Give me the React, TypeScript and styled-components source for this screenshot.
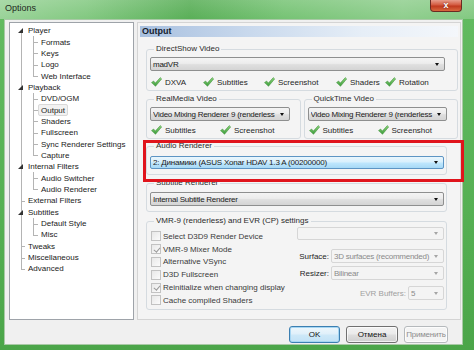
import React from 'react'
import styled, { createGlobalStyle } from 'styled-components'

type Conn = { up?: boolean; down?: boolean; right?: boolean; arrow?: boolean }

interface TreeItem {
    label: string
    level: 0 | 1
    open?: boolean
    first?: boolean
    lastTop?: boolean
    lastChild?: boolean
    selected?: boolean
}

const treeItems: TreeItem[] = [
    { label: 'Player', level: 0, open: true, first: true },
    { label: 'Formats', level: 1 },
    { label: 'Keys', level: 1 },
    { label: 'Logo', level: 1 },
    { label: 'Web Interface', level: 1, lastChild: true },
    { label: 'Playback', level: 0, open: true },
    { label: 'DVD/OGM', level: 1 },
    { label: 'Output', level: 1, selected: true },
    { label: 'Shaders', level: 1 },
    { label: 'Fullscreen', level: 1 },
    { label: 'Sync Renderer Settings', level: 1 },
    { label: 'Capture', level: 1, lastChild: true },
    { label: 'Internal Filters', level: 0, open: true },
    { label: 'Audio Switcher', level: 1 },
    { label: 'Audio Renderer', level: 1, lastChild: true },
    { label: 'External Filters', level: 0 },
    { label: 'Subtitles', level: 0, open: true },
    { label: 'Default Style', level: 1 },
    { label: 'Misc', level: 1, lastChild: true },
    { label: 'Tweaks', level: 0 },
    { label: 'Miscellaneous', level: 0 },
    { label: 'Advanced', level: 0, lastTop: true },
]

const GlobalStyle = createGlobalStyle`
    html, body { margin: 0; padding: 0; }
    body {
        font-family: "Liberation Sans", Arial, sans-serif;
        font-size: 8px;
        color: #1e1e1e;
    }
`

const CheckIcon: React.FC = () => (
    <svg width="11" height="10" viewBox="0 0 11 10">
        <defs>
            <linearGradient id="tick" x1="0" y1="0" x2="0" y2="1">
                <stop offset="0" stopColor="#8fd67e" />
                <stop offset="1" stopColor="#3c9c3a" />
            </linearGradient>
        </defs>
        <path d="M0.5 5.6 L2.6 4 L4.3 6.1 L9.3 0.6 L10.7 1.9 L4.5 9.3 Z" fill="url(#tick)" stroke="#3b8d37" strokeWidth="0.5" />
    </svg>
)

const Options: React.FC = () => {
    return (
        <Window>
            <TitleBar>
                <Title>Options</Title>
                <CloseButton>x</CloseButton>
            </TitleBar>
            <Client>
                <Main>
                    <Tree>
                        {treeItems.map((item) => {
                            const top: Conn = item.level === 0
                                ? { up: !item.first, down: !item.lastTop, right: !item.open, arrow: item.open }
                                : { up: true, down: true }
                            return (
                                <TreeRow key={item.label}>
                                    <Cell $w={9} $x={5} $up={top.up} $down={top.down} $right={top.right}>
                                        {top.arrow && <Arrow />}
                                    </Cell>
                                    {item.level === 1 && (
                                        <Cell $w={13} $x={8} $up $down={!item.lastChild} $right />
                                    )}
                                    <TreeLabel $selected={item.selected}>{item.label}</TreeLabel>
                                </TreeRow>
                            )
                        })}
                    </Tree>
                    <Panel>
                        <Header>Output</Header>
                        <Body>
                            <Group $mt={7}>
                                <Legend>DirectShow Video</Legend>
                                <Select><SelectText>madVR</SelectText><Caret /></Select>
                                <Checks $cols="52px 61px 72px 49px auto">
                                    <CheckItem><CheckIcon />DXVA</CheckItem>
                                    <CheckItem><CheckIcon />Subtitles</CheckItem>
                                    <CheckItem><CheckIcon />Screenshot</CheckItem>
                                    <CheckItem><CheckIcon />Shaders</CheckItem>
                                    <CheckItem><CheckIcon />Rotation</CheckItem>
                                </Checks>
                            </Group>
                            <Pair>
                                <Group $mt={0} $grow>
                                    <Legend>RealMedia Video</Legend>
                                    <Select $w={140}><SelectText>Video Mixing Renderer 9 (renderless</SelectText><Caret /></Select>
                                    <Checks $cols="69px auto" $mt={3}>
                                        <CheckItem><CheckIcon />Subtitles</CheckItem>
                                        <CheckItem><CheckIcon />Screenshot</CheckItem>
                                    </Checks>
                                </Group>
                                <Group $mt={0} $grow>
                                    <Legend>QuickTime Video</Legend>
                                    <Select $w={139}><SelectText>Video Mixing Renderer 9 (renderless</SelectText><Caret /></Select>
                                    <Checks $cols="69px auto" $mt={3}>
                                        <CheckItem><CheckIcon />Subtitles</CheckItem>
                                        <CheckItem><CheckIcon />Screenshot</CheckItem>
                                    </Checks>
                                </Group>
                            </Pair>
                            <Group $mt={2} $narrow $pt={5} $pb={5}>
                                <Legend>Audio Renderer</Legend>
                                <Select $variant="active" $h={13}>
                                    <SelectText $spacing={-0.2}>2: Динамики (ASUS Xonar HDAV 1.3 A (00200000)</SelectText><Caret />
                                </Select>
                            </Group>
                            <Group $mt={3} $narrow $pt={4} $pb={5}>
                                <Legend>Subtitle Renderer</Legend>
                                <Select $h={14}><SelectText>Internal Subtitle Renderer</SelectText><Caret /></Select>
                            </Group>
                            <Group $mt={4} $narrow $pt={1} $pb={2}>
                                <Legend>VMR-9 (renderless) and EVR (CP) settings</Legend>
                                <VmrLayout>
                                    <BoxList>
                                        <BoxRow><Box /> Select D3D9 Render Device</BoxRow>
                                        <BoxRow><Box $checked /> VMR-9 Mixer Mode</BoxRow>
                                        <BoxRow><Box /> Alternative VSync</BoxRow>
                                        <BoxRow><Box /> D3D Fullscreen</BoxRow>
                                        <BoxRow><Box $checked /> Reinitialize when changing display</BoxRow>
                                        <BoxRow><Box /> Cache compiled Shaders</BoxRow>
                                    </BoxList>
                                    <Settings>
                                        <Select $variant="disabled" $h={13}><SelectText>&nbsp;</SelectText><Caret $muted /></Select>
                                        <SettingRow $mt={9}>
                                            <SettingLabel>Surface:</SettingLabel>
                                            <Select $variant="disabled" $w={113}><SelectText>3D surfaces (recommended)</SelectText><Caret $muted /></Select>
                                        </SettingRow>
                                        <SettingRow $mt={3}>
                                            <SettingLabel>Resizer:</SettingLabel>
                                            <Select $variant="disabled" $w={113}><SelectText>Bilinear</SelectText><Caret $muted /></Select>
                                        </SettingRow>
                                        <SettingRow $mt={6}>
                                            <SettingLabel $muted>EVR Buffers:</SettingLabel>
                                            <Select $variant="disabled" $w={36}><SelectText>5</SelectText><Caret $muted /></Select>
                                        </SettingRow>
                                    </Settings>
                                </VmrLayout>
                            </Group>
                        </Body>
                    </Panel>
                </Main>
                <Footer>
                    <Button $kind="default" $w={51}>OK</Button>
                    <Button $w={52}>Отмена</Button>
                    <Button $kind="disabled" $w={44}>Применить</Button>
                </Footer>
            </Client>
            <Highlight />
        </Window>
    )
}

export default function App() {
    return (
        <>
            <GlobalStyle />
            <Options />
        </>
    )
}

const Window = styled.div`
    position: relative;
    width: 474px;
    height: 350px;
    box-sizing: border-box;
    display: flex;
    flex-direction: column;
    padding: 0 11px 5px 4px;
    background: linear-gradient(180deg, #7cc67a 0, #62ba60 20px, #56b054 60%, #4ba549 100%);
    overflow: hidden;
`

const TitleBar = styled.div`
    display: flex;
    justify-content: space-between;
    align-items: flex-start;
    height: 19px;
    margin: 0 -11px 0 -4px;
    padding: 0 12px 0 5px;
    background: linear-gradient(90deg,
        rgba(255,255,255,0.35) 0,
        rgba(255,255,255,0.2) 18%,
        rgba(20,90,20,0.12) 40%,
        rgba(255,255,255,0.12) 60%,
        rgba(255,255,255,0.28) 85%,
        rgba(255,255,255,0.2) 100%);
`

const Title = styled.div`
    font-size: 9px;
    line-height: 17px;
    color: #1d2a1d;
`

const CloseButton = styled.div`
    width: 32px;
    height: 12px;
    box-sizing: border-box;
    border: 1px solid #6b2a22;
    border-top: none;
    border-radius: 0 0 4px 4px;
    background: linear-gradient(180deg, #e79d8c 0, #d45a40 45%, #c0391f 55%, #d8683e 100%);
    color: #fff;
    font-weight: bold;
    font-size: 9px;
    line-height: 10px;
    text-align: center;
    text-shadow: 0 0 2px #5a1a10;
`

const Client = styled.div`
    flex: 1;
    display: flex;
    flex-direction: column;
    background: #f0f0f0;
    border: 1px solid #a9c9a6;
    padding: 2px 1px 0 4px;
`

const Main = styled.div`
    display: flex;
    height: 298px;
`

const Tree = styled.div`
    width: 125px;
    box-sizing: border-box;
    background: #fff;
    border: 1px solid #9ea3a9;
    padding: 2px 0 0 6px;
`

const TreeRow = styled.div`
    display: flex;
    align-items: stretch;
    height: 11.35px;
`

const Cell = styled.div<{ $w: number; $x: number; $up?: boolean; $down?: boolean; $right?: boolean }>`
    position: relative;
    flex: none;
    width: ${(p) => p.$w}px;
    &::before {
        content: '';
        position: absolute;
        left: ${(p) => p.$x}px;
        width: 1px;
        top: ${(p) => (p.$up ? '0' : '50%')};
        bottom: ${(p) => (p.$down ? '0' : '50%')};
        background: #b4b4b4;
        display: ${(p) => (p.$up || p.$down ? 'block' : 'none')};
    }
    &::after {
        content: '';
        position: absolute;
        left: ${(p) => p.$x}px;
        right: 0;
        top: 50%;
        height: 1px;
        background: #b4b4b4;
        display: ${(p) => (p.$right ? 'block' : 'none')};
    }
`

const Arrow = styled.span`
    position: absolute;
    left: 2px;
    top: 3px;
    width: 0;
    height: 0;
    border-left: 5px solid transparent;
    border-bottom: 5px solid #333;
    z-index: 1;
`

const TreeLabel = styled.span<{ $selected?: boolean }>`
    display: flex;
    align-items: center;
    padding: 0 2px;
    border: 1px solid ${(p) => (p.$selected ? '#d9d9d9' : 'transparent')};
    border-radius: 2px;
    background: ${(p) => (p.$selected ? '#f2f2f2' : 'transparent')};
    line-height: 9px;
    white-space: nowrap;
    color: #1a1a1a;
`

const Panel = styled.div`
    margin-left: 3px;
    width: 324px;
    box-sizing: border-box;
    border: 1px solid #d4d4d4;
    background: #f4f4f4;
    padding: 3px 2px 0 2px;
`

const Header = styled.div`
    height: 11px;
    padding-left: 2px;
    background: linear-gradient(90deg, #a8c0df 0, #c9d9ed 35%, #e6eef7 70%, #f4f7fb 100%);
    font-size: 9px;
    font-weight: bold;
    line-height: 11px;
    color: #15202e;
`

const Body = styled.div`
    display: flex;
    flex-direction: column;
    padding-left: 6px;
`

const Pair = styled.div`
    display: flex;
    gap: 3px;
    margin-top: 3px;
`

const Group = styled.fieldset<{ $mt: number; $grow?: boolean; $narrow?: boolean; $pt?: number; $pb?: number }>`
    margin: ${(p) => p.$mt}px ${(p) => (p.$narrow ? 11 : 0)}px 0 0;
    min-width: 0;
    flex: ${(p) => (p.$grow ? '1 1 0' : 'none')};
    border: 1px solid #d5dbe0;
    border-radius: 3px;
    padding: ${(p) => p.$pt ?? 3}px ${(p) => (p.$narrow ? 2 : 12)}px ${(p) => p.$pb ?? 2}px 3px;
    ${(p) => (p.$grow ? 'padding-right: 3px;' : '')}
`

const Legend = styled.legend`
    margin-left: 4px;
    padding: 0 2px;
    line-height: 10px;
    font-size: 8px;
    color: #2a2a2a;
`

const Select = styled.div<{ $w?: number; $h?: number; $variant?: 'normal' | 'active' | 'disabled' }>`
    display: flex;
    align-items: center;
    box-sizing: border-box;
    width: ${(p) => (p.$w ? `${p.$w}px` : '100%')};
    height: ${(p) => p.$h ?? 14}px;
    padding-left: 2px;
    border: 1px solid ${(p) => (p.$variant === 'active' ? '#5d95c4' : p.$variant === 'disabled' ? '#d6d6d6' : '#8e8f8f')};
    border-radius: 2px;
    background: ${(p) =>
        p.$variant === 'active'
            ? 'linear-gradient(180deg, #eaf6fd 0, #d9f0fc 45%, #bee6fd 55%, #a7d9f5 100%)'
            : p.$variant === 'disabled'
            ? '#f4f4f4'
            : 'linear-gradient(180deg, #f4f4f4 0, #ececec 45%, #dfdfdf 55%, #d4d4d4 100%)'};
    color: ${(p) => (p.$variant === 'disabled' ? '#8a8a8a' : '#1a1a1a')};
    font-size: 8px;
`

const SelectText = styled.span<{ $spacing?: number }>`
    flex: 1;
    min-width: 0;
    overflow: hidden;
    white-space: nowrap;
    letter-spacing: ${(p) => p.$spacing ?? -0.25}px;
`

const Caret = styled.span<{ $muted?: boolean }>`
    flex: none;
    width: 0;
    height: 0;
    margin: 0 5px 0 3px;
    border-left: 2.5px solid transparent;
    border-right: 2.5px solid transparent;
    border-top: 3px solid ${(p) => (p.$muted ? '#a5a5a5' : '#111')};
`

const Checks = styled.div<{ $cols: string; $mt?: number }>`
    display: grid;
    grid-template-columns: ${(p) => p.$cols};
    height: 12px;
    margin-top: ${(p) => p.$mt ?? 5}px;
    padding-left: 1px;
`

const CheckItem = styled.div`
    display: flex;
    align-items: center;
    gap: 3px;
    white-space: nowrap;
    color: #1e1e1e;
`

const VmrLayout = styled.div`
    display: flex;
    justify-content: space-between;
`

const BoxList = styled.div`
    display: flex;
    flex-direction: column;
    margin-top: 3px;
    padding-left: 1px;
`

const BoxRow = styled.div`
    display: flex;
    align-items: center;
    height: 12.8px;
    white-space: nowrap;
    color: #3a3a3a;
`

const Box = styled.span<{ $checked?: boolean }>`
    position: relative;
    box-sizing: border-box;
    width: 10px;
    height: 10px;
    margin-right: 2px;
    border: 1px solid #c2c2c2;
    background: linear-gradient(135deg, #e8e8e8 0, #fbfbfb 100%);
    &::after {
        content: '';
        display: ${(p) => (p.$checked ? 'block' : 'none')};
        position: absolute;
        left: 2.5px;
        top: 0.5px;
        width: 2.5px;
        height: 5px;
        border-right: 1px solid #9a9a9a;
        border-bottom: 1px solid #9a9a9a;
        transform: rotate(40deg);
    }
`

const Settings = styled.div`
    display: flex;
    flex-direction: column;
    align-items: flex-end;
    width: 147px;
`

const SettingRow = styled.div<{ $mt: number }>`
    display: flex;
    align-items: center;
    gap: 2px;
    margin-top: ${(p) => p.$mt}px;
`

const SettingLabel = styled.span<{ $muted?: boolean }>`
    color: ${(p) => (p.$muted ? '#a0a0a0' : '#1e1e1e')};
    white-space: nowrap;
`

const Footer = styled.div`
    display: flex;
    justify-content: flex-end;
    gap: 6px;
    padding: 6px 13px 0 0;
`

const Button = styled.div<{ $w: number; $kind?: 'default' | 'disabled' }>`
    display: flex;
    align-items: center;
    justify-content: center;
    box-sizing: border-box;
    width: ${(p) => p.$w}px;
    height: 17px;
    border: 1px solid ${(p) => (p.$kind === 'default' ? '#3c7fb1' : p.$kind === 'disabled' ? '#b5b9bc' : '#707070')};
    border-radius: 3px;
    background: ${(p) =>
        p.$kind === 'default'
            ? 'linear-gradient(180deg, #eef7fc 0, #e0f0fa 45%, #cde8f8 55%, #c2e2f6 100%)'
            : p.$kind === 'disabled'
            ? '#f4f4f4'
            : 'linear-gradient(180deg, #f2f2f2 0, #ebebeb 45%, #dddddd 55%, #cfcfcf 100%)'};
    box-shadow: ${(p) => (p.$kind === 'default' ? 'inset 0 0 0 1px #a6d6f3' : 'inset 0 0 0 1px rgba(255,255,255,0.7)')};
    color: ${(p) => (p.$kind === 'disabled' ? '#8d8d8d' : '#111')};
    font-size: 8px;
    letter-spacing: ${(p) => (p.$kind === 'disabled' ? '-0.2px' : 'normal')};
    white-space: nowrap;
`

const Highlight = styled.div`
    position: absolute;
    left: 143px;
    top: 140px;
    width: 321px;
    height: 42px;
    box-sizing: border-box;
    border: 3px solid #e0141c;
    pointer-events: none;
`
